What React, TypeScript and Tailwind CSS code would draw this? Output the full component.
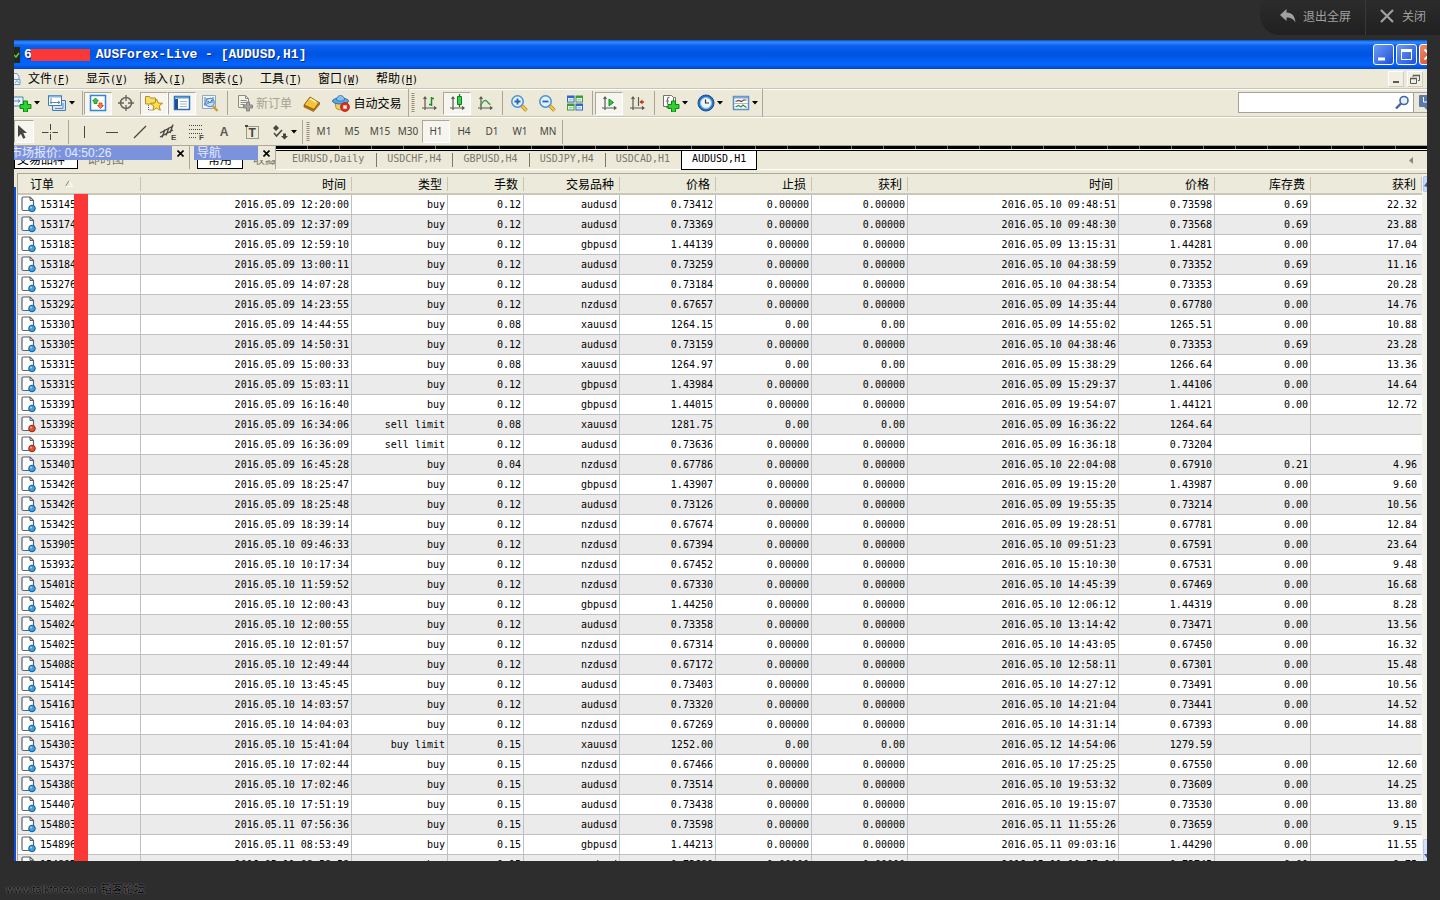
import { useState } from "react";
import type { ReactNode } from "react";
import clsx from "clsx";

const mono = "font-['DejaVu_Sans_Mono','Noto_Sans_CJK_SC',monospace]";
const cjk = "font-['Noto_Sans_CJK_SC',sans-serif]";

type Order = {
  id: string;
  open: string;
  type: string;
  lots: string;
  symbol: string;
  price: string;
  sl: string;
  tp: string;
  close: string;
  closePrice: string;
  swap: string;
  profit: string;
};

// id | open | type | lots | symbol | price | sl and tp | close | close price | swap | profit
const raw = `153145|05.09 12:20:00|buy|0.12|audusd|0.73412|0.00000|05.10 09:48:51|0.73598|0.69|22.32
153174|05.09 12:37:09|buy|0.12|audusd|0.73369|0.00000|05.10 09:48:30|0.73568|0.69|23.88
153183|05.09 12:59:10|buy|0.12|gbpusd|1.44139|0.00000|05.09 13:15:31|1.44281|0.00|17.04
153184|05.09 13:00:11|buy|0.12|audusd|0.73259|0.00000|05.10 04:38:59|0.73352|0.69|11.16
153276|05.09 14:07:28|buy|0.12|audusd|0.73184|0.00000|05.10 04:38:54|0.73353|0.69|20.28
153292|05.09 14:23:55|buy|0.12|nzdusd|0.67657|0.00000|05.09 14:35:44|0.67780|0.00|14.76
153301|05.09 14:44:55|buy|0.08|xauusd|1264.15|0.00|05.09 14:55:02|1265.51|0.00|10.88
153305|05.09 14:50:31|buy|0.12|audusd|0.73159|0.00000|05.10 04:38:46|0.73353|0.69|23.28
153315|05.09 15:00:33|buy|0.08|xauusd|1264.97|0.00|05.09 15:38:29|1266.64|0.00|13.36
153319|05.09 15:03:11|buy|0.12|gbpusd|1.43984|0.00000|05.09 15:29:37|1.44106|0.00|14.64
153391|05.09 16:16:40|buy|0.12|gbpusd|1.44015|0.00000|05.09 19:54:07|1.44121|0.00|12.72
153398|05.09 16:34:06|sell limit|0.08|xauusd|1281.75|0.00|05.09 16:36:22|1264.64||
153398|05.09 16:36:09|sell limit|0.12|audusd|0.73636|0.00000|05.09 16:36:18|0.73204||
153401|05.09 16:45:28|buy|0.04|nzdusd|0.67786|0.00000|05.10 22:04:08|0.67910|0.21|4.96
153426|05.09 18:25:47|buy|0.12|gbpusd|1.43907|0.00000|05.09 19:15:20|1.43987|0.00|9.60
153426|05.09 18:25:48|buy|0.12|audusd|0.73126|0.00000|05.09 19:55:35|0.73214|0.00|10.56
153429|05.09 18:39:14|buy|0.12|nzdusd|0.67674|0.00000|05.09 19:28:51|0.67781|0.00|12.84
153905|05.10 09:46:33|buy|0.12|nzdusd|0.67394|0.00000|05.10 09:51:23|0.67591|0.00|23.64
153932|05.10 10:17:34|buy|0.12|nzdusd|0.67452|0.00000|05.10 15:10:30|0.67531|0.00|9.48
154018|05.10 11:59:52|buy|0.12|nzdusd|0.67330|0.00000|05.10 14:45:39|0.67469|0.00|16.68
154024|05.10 12:00:43|buy|0.12|gbpusd|1.44250|0.00000|05.10 12:06:12|1.44319|0.00|8.28
154024|05.10 12:00:55|buy|0.12|audusd|0.73358|0.00000|05.10 13:14:42|0.73471|0.00|13.56
154025|05.10 12:01:57|buy|0.12|nzdusd|0.67314|0.00000|05.10 14:43:05|0.67450|0.00|16.32
154088|05.10 12:49:44|buy|0.12|nzdusd|0.67172|0.00000|05.10 12:58:11|0.67301|0.00|15.48
154145|05.10 13:45:45|buy|0.12|audusd|0.73403|0.00000|05.10 14:27:12|0.73491|0.00|10.56
154161|05.10 14:03:57|buy|0.12|audusd|0.73320|0.00000|05.10 14:21:04|0.73441|0.00|14.52
154161|05.10 14:04:03|buy|0.12|nzdusd|0.67269|0.00000|05.10 14:31:14|0.67393|0.00|14.88
154303|05.10 15:41:04|buy limit|0.15|xauusd|1252.00|0.00|05.12 14:54:06|1279.59||
154379|05.10 17:02:44|buy|0.15|nzdusd|0.67466|0.00000|05.10 17:25:25|0.67550|0.00|12.60
154380|05.10 17:02:46|buy|0.15|audusd|0.73514|0.00000|05.10 19:53:32|0.73609|0.00|14.25
154407|05.10 17:51:19|buy|0.15|audusd|0.73438|0.00000|05.10 19:15:07|0.73530|0.00|13.80
154803|05.11 07:56:36|buy|0.15|audusd|0.73598|0.00000|05.11 11:55:26|0.73659|0.00|9.15
154896|05.11 08:53:49|buy|0.15|gbpusd|1.44213|0.00000|05.11 09:03:16|1.44290|0.00|11.55
154897|05.11 08:58:58|buy|0.15|audusd|0.73680|0.00000|05.11 10:57:04|0.73745|0.00|9.75`;

const orders: Order[] = raw.split("\n").map((line) => {
  const [id, open, type, lots, symbol, price, stop, close, closePrice, swap, profit] = line.split("|");
  return {
    id,
    open: `2016.${open}`,
    type,
    lots,
    symbol,
    price,
    sl: stop,
    tp: stop,
    close: `2016.${close}`,
    closePrice,
    swap,
    profit,
  };
});

const columns: { key: keyof Order; label: string; width: string }[] = [
  { key: "id", label: "订单", width: "w-[123px]" },
  { key: "open", label: "时间", width: "w-[211px]" },
  { key: "type", label: "类型", width: "w-[96px]" },
  { key: "lots", label: "手数", width: "w-[76px]" },
  { key: "symbol", label: "交易品种", width: "w-[96px]" },
  { key: "price", label: "价格", width: "w-[96px]" },
  { key: "sl", label: "止损", width: "w-[96px]" },
  { key: "tp", label: "获利", width: "w-[96px]" },
  { key: "close", label: "时间", width: "" },
  { key: "closePrice", label: "价格", width: "w-[96px]" },
  { key: "swap", label: "库存费", width: "w-[96px]" },
  { key: "profit", label: "获利", width: "w-[111px]" },
];

const menus = [
  ["文件", "F"],
  ["显示", "V"],
  ["插入", "I"],
  ["图表", "C"],
  ["工具", "T"],
  ["窗口", "W"],
  ["帮助", "H"],
];

const periods = ["M1", "M5", "M15", "M30", "H1", "H4", "D1", "W1", "MN"];
const chartTabs = ["EURUSD,Daily", "USDCHF,H4", "GBPUSD,H4", "USDJPY,H4", "USDCAD,H1", "AUDUSD,H1"];

function Icon({ children, size = 18 }: { children: ReactNode; size?: number }) {
  return (
    <svg width={size} height={size} viewBox="0 0 18 18" fill="none" className="shrink-0" aria-hidden="true">
      {children}
    </svg>
  );
}

function Caret() {
  return (
    <svg width="6" height="4" viewBox="0 0 6 4" className="shrink-0" aria-hidden="true">
      <path d="M0 0h6L3 3.5z" fill="#000" />
    </svg>
  );
}

function Sep({ wide }: { wide?: boolean }) {
  return (
    <span className={clsx("flex shrink-0 justify-center", wide ? "w-[6px]" : "w-1")}>
      <span className="h-6 w-px bg-[#a9a698]" />
    </span>
  );
}

function Grip() {
  return (
    <svg width="4" height="20" viewBox="0 0 4 20" className="shrink-0" aria-hidden="true">
      <path d="M2 0v20" stroke="#8f8c7d" strokeWidth="3" strokeDasharray="1 1" />
    </svg>
  );
}

function Tool({
  label,
  active,
  className,
  children,
}: {
  label: string;
  active?: boolean;
  className?: string;
  children: ReactNode;
}) {
  return (
    <button
      type="button"
      aria-label={label}
      className={clsx(
        "flex h-[23px] shrink-0 items-center justify-center",
        className ?? "w-7",
        active && "border border-[#aca899] border-r-white border-b-white bg-[#f6f5f0]"
      )}
    >
      {children}
    </button>
  );
}

const Plus = () => (
  <path d="M9.500 7h4v3.500h3.500v4h-3.500V18h-4v-3.500H6v-4h3.500z" fill="#2fd02f" stroke="#0b8a12" />
);

const Axes = () => (
  <path d="M5 3v13M2 14h14M3.500 5L5 3l1.500 2M14 12.500l2 1.500-2 1.500" stroke="#5b5b54" strokeWidth="1.200" />
);

function Lens({ sign }: { sign: string }) {
  return (
    <Icon>
      <path d="M11 11l5.500 5.500" stroke="#b8860b" strokeWidth="3.500" />
      <path d="M11 11l5.300 5.300" stroke="#f5cb4b" strokeWidth="2" />
      <circle cx="7.500" cy="7.500" r="5.700" fill="#e2f1ff" stroke="#4d8fd0" strokeWidth="1.500" />
      <path d={sign} stroke="#1f66bd" strokeWidth="1.800" />
    </Icon>
  );
}

function Toolbar() {
  return (
    <div className="flex h-7 items-center border-t border-b border-t-white border-b-[#c9c6b8]">
      <div className="flex h-7 shrink-0 items-center border-r border-[#aca899]">
        <Tool label="新图表" className="w-7 gap-[2px] !justify-start">
          <Icon>
            <path d="M-3 3H9v9H-3z" fill="#e6f1fb" stroke="#4b83b9" />
            <path d="M0 7h6M4 5.500L6 7 4 8.500" stroke="#5f87ad" />
            <Plus />
          </Icon>
          <Caret />
        </Tool>
        <Tool label="配置文件" className="w-[38px] gap-[3px]">
          <Icon>
            <path d="M4.500 6.500h13v10h-13z" fill="#d5e7f7" stroke="#3f7cb6" />
            <path d="M.5 1.500h13v10H.5z" fill="#fff" stroke="#3f7cb6" />
            <path d="M1 2.500h12" stroke="#86b3dd" strokeWidth="2" />
            <path d="M3 4v6M2 8.500h10M10 7l2 1.500-2 1.500M15 9v5.500H7" stroke="#5f87ad" />
          </Icon>
          <Caret />
        </Tool>
        <Sep />
        <Tool label="市场报价" active>
          <Icon>
            <path d="M1.500 1.500h15v15h-15z" fill="#fff" stroke="#2f86d4" strokeWidth="1.500" />
            <path d="M6.500 4l3 3H8v2.500H5V7H3.500z" fill="#45c33d" stroke="#1b8a1b" strokeWidth=".8" />
            <path d="M11.500 14.500l3-3H13V9h-3v2.500H8.500z" fill="#ff7a4a" stroke="#d13c14" strokeWidth=".8" />
          </Icon>
        </Tool>
        <Tool label="数据窗口">
          <Icon>
            <circle cx="9" cy="9" r="5.500" stroke="#66665e" strokeWidth="1.500" />
            <path d="M9 1v6M9 11v6M1 9h6M11 9h6" stroke="#66665e" strokeWidth="1.300" />
          </Icon>
        </Tool>
        <Tool label="导航" active>
          <Icon>
            <path d="M.5 2.500h4l1 1.500h5v6H.5z" fill="#f7dc6b" stroke="#b8901c" />
            <path d="M3.500 11v5H7" stroke="#555" strokeDasharray="1 1" />
            <path
              d="M11.500 5l1.700 4 4.300.3-3.300 2.700 1.100 4.300-3.800-2.300-3.700 2.300 1.100-4.300L5.500 9.300l4.300-.3z"
              fill="#ffe24d"
              stroke="#b98a10"
            />
          </Icon>
        </Tool>
        <Tool label="终端" active>
          <Icon>
            <path d="M1.500 2.500h15v13h-15z" fill="#fff" stroke="#2f6fb5" strokeWidth="1.500" />
            <path d="M2 3.500h14" stroke="#5b9bdc" strokeWidth="2" />
            <path d="M3.500 5v10" stroke="#1e4f94" strokeWidth="3" />
            <path d="M7 7.500h7M7 10h7M7 12.500h7" stroke="#a5b6c8" />
          </Icon>
        </Tool>
        <Tool label="策略测试">
          <Icon>
            <path d="M1.500 1.500h13v13h-13z" fill="#eef5fc" stroke="#8ba9c7" />
            <path d="M4 3v9M3 10h8M6 4v4M12 3v4" stroke="#55799f" />
            <circle cx="9" cy="8.500" r="4.200" fill="#cfe4f7" fillOpacity=".8" stroke="#5c93c9" strokeWidth="1.300" />
            <path d="M7 10V7l2 2 2-3v3" stroke="#3d73a9" />
            <path d="M12 12l4.500 5" stroke="#d29a2f" strokeWidth="2.500" />
          </Icon>
        </Tool>
        <Sep wide />
        <button
          type="button"
          className={clsx("flex h-[23px] w-[68px] shrink-0 items-center justify-center gap-[2px] text-xs text-[#a5a294]", cjk)}
        >
          <Icon>
            <path d="M2.500 1.500h7l3 3v9h-10z" fill="#f2f1ea" stroke="#8f8d83" />
            <path d="M9.500 1.500v3h3M4.500 6.500h6M4.500 8.500h6M4.500 10.500h4" stroke="#8f8d83" />
            <path d="M10.500 8h3v3h3v3h-3v3h-3v-3h-3v-3h3z" fill="#a5a59d" stroke="#85857d" />
          </Icon>
          <span className="leading-4">新订单</span>
        </button>
        <Tool label="编辑器">
          <Icon>
            <path d="M1 11l6-8 9 5.500-5 7z" fill="#f3c33c" stroke="#8e5d0b" />
            <path d="M1 11v2l9.500 4.500 6-7v-2l-5.500 7z" fill="#b87a14" stroke="#8e5d0b" strokeWidth=".7" />
            <path d="M7 4.500l6 3.500" stroke="#fff0a8" strokeWidth="1.500" />
          </Icon>
        </Tool>
        <button
          type="button"
          className={clsx("flex h-[23px] w-[82px] shrink-0 items-center justify-center gap-[3px] text-xs text-black", cjk)}
        >
          <Icon>
            <path d="M3 8l1 6c2 2.500 7 2.500 10 0l1-6z" fill="#f2cf63" stroke="#b8912c" />
            <ellipse cx="8.500" cy="7" rx="8" ry="3" fill="#5fa8e2" stroke="#2b6fb2" />
            <path d="M4.500 6c0-6 8-6 8 0-2 1.500-6 1.500-8 0z" fill="#84c3f1" stroke="#2b6fb2" strokeWidth=".8" />
            <circle cx="13" cy="13" r="4.500" fill="#e0311c" stroke="#a81a0c" strokeWidth=".7" />
            <path d="M11.300 11.300h3.400v3.400h-3.400z" fill="#fff" />
          </Icon>
          <span className="leading-4">自动交易</span>
        </button>
      </div>
      <div className="flex h-7 shrink-0 items-center border-r border-[#aca899] pl-[2px]">
        <Grip />
        <Tool label="柱状图">
          <Icon>
            <Axes />
            <path d="M11.500 3v9M9 10.500h2.500M11.500 4.500H14" stroke="#15912a" strokeWidth="1.500" />
          </Icon>
        </Tool>
        <Tool label="阴阳烛" active>
          <Icon>
            <Axes />
            <path d="M11.500 0v13" stroke="#127f22" strokeWidth="1.300" />
            <path d="M9.500 2.500h4v8h-4z" fill="#35d04c" stroke="#127f22" />
          </Icon>
        </Tool>
        <Tool label="折线图">
          <Icon>
            <Axes />
            <path d="M4 12c2-2 3-6 5.500-5.500 2.500.500 2.500 3.500 5 4" stroke="#3b9a4b" strokeWidth="1.300" />
          </Icon>
        </Tool>
        <Sep wide />
        <Tool label="放大">
          <Lens sign="M4.500 7.500h6M7.500 4.500v6" />
        </Tool>
        <Tool label="缩小">
          <Lens sign="M4.500 7.500h6" />
        </Tool>
        <Tool label="平铺窗口">
          <Icon>
            <path d="M1 1.500h7.500v7H1zM9.500 9.500H17v7H9.500z" fill="#3167c9" />
            <path d="M9.500 1.500H17v7H9.500zM1 9.500h7.500v7H1z" fill="#3f9d2c" />
            <path
              d="M2 4h5.500v3.500H2zM10.500 4H16v3.500h-5.500zM2 12h5.500v3.500H2zM10.500 12H16v3.500h-5.500z"
              fill="#e9f2fb"
            />
            <path d="M3 5.800h3.500M11.500 5.800H15M3 13.800h3.500M11.500 13.800H15" stroke="#8fa9c9" />
          </Icon>
        </Tool>
        <Sep wide />
        <Tool label="自动滚动" active>
          <Icon>
            <Axes />
            <path d="M9 5l4.500 3.500L9 12z" fill="#33c04a" stroke="#178a2b" />
          </Icon>
        </Tool>
        <Tool label="图表平移">
          <Icon>
            <Axes />
            <path d="M10.500 3v9" stroke="#5b5b54" strokeWidth="1.200" />
            <path d="M16 8h-3.500" stroke="#b43a17" strokeWidth="1.500" />
            <path d="M11.500 8l3-2.500v5z" fill="#b43a17" />
          </Icon>
        </Tool>
        <Sep wide />
        <Tool label="指标列表" className="w-[35px] gap-[2px]">
          <Icon>
            <path d="M4.500 3.500h9v10h-9z" fill="#fff" stroke="#73736b" />
            <path d="M1.500 1.500h8l2 2v9h-10z" fill="#fff" stroke="#73736b" />
            <path d="M7.500 3.500c-2-.5-2 1-2 3v4M4 7h3" stroke="#73736b" strokeWidth="1.200" />
            <Plus />
          </Icon>
          <Caret />
        </Tool>
        <Tool label="时间周期" className="w-[35px] gap-[2px]">
          <Icon>
            <circle cx="9" cy="9" r="8" fill="#2b72c4" stroke="#174f96" />
            <circle cx="9" cy="9" r="5.500" fill="#eef6ff" stroke="#8fbbe8" />
            <path d="M8.500 5.500V9H12" stroke="#333" strokeWidth="1.200" />
          </Icon>
          <Caret />
        </Tool>
        <Tool label="模板" className="w-[35px] gap-[2px]">
          <Icon>
            <path d="M1.500 2.500h15v13h-15z" fill="#fff" stroke="#5a8fc4" strokeWidth="1.500" />
            <path d="M2 3.500h14" stroke="#76a9dc" strokeWidth="2" />
            <path d="M3.500 7.500l3-1 3 1 2-1.500h3" stroke="#7b3b23" strokeWidth="1.200" />
            <path d="M2 9.500h14" stroke="#9bbcdc" />
            <path d="M3.500 13l3-1.500 2.500 1.500 2-2 3.500 2.500" stroke="#2c8c3a" strokeWidth="1.200" />
          </Icon>
          <Caret />
        </Tool>
      </div>
      <div className="mt-[2px] ml-auto flex h-[21px] shrink-0 self-start border border-r-0 border-[#a5a294] bg-white">
        <input aria-label="搜索" type="text" className="w-[156px] bg-transparent px-1 text-xs outline-none" />
        <button type="button" aria-label="查找" className="flex w-[19px] items-center border-r border-[#a5a294]">
          <svg width="15" height="15" viewBox="0 0 15 15" fill="none" aria-hidden="true">
            <circle cx="9" cy="5.500" r="4" fill="#e8f0fb" stroke="#3f66ab" strokeWidth="1.600" />
            <path d="M6 8.500L1 13.500" stroke="#3f66ab" strokeWidth="2.400" />
          </svg>
        </button>
        <span className="flex w-[13px] items-center justify-end overflow-hidden bg-[#ece9d8]">
          <svg width="8" height="17" viewBox="0 0 8 17" aria-hidden="true">
            <path d="M0 2q0-1 1-1h7v15l-3-3H1q-1 0-1-1z" fill="#5a79ac" />
            <path d="M4.500 3v5H8" stroke="#fff" fill="none" />
          </svg>
        </span>
      </div>
    </div>
  );
}

function DrawBar() {
  const [period, setPeriod] = useState("H1");

  return (
    <div className="flex h-7 items-center border-t border-t-white">
      <div className="flex h-6 shrink-0 items-center border-r border-[#aca899]">
        <Tool label="光标" active className="w-5">
          <svg width="12" height="16" viewBox="0 0 12 16" className="mr-1 shrink-0" aria-hidden="true">
            <path d="M2 1v12l3-3 2.200 4.800 2.300-1L7.300 9H11z" fill="#46463f" />
          </svg>
        </Tool>
        <Tool label="十字准线" className="w-8">
          <Icon>
            <path d="M9.500 1v6M9.500 11v6M1 9.500h6.500M11.500 9.500H17M9 9.500h1" stroke="#46463f" />
          </Icon>
        </Tool>
        <Sep />
        <Tool label="垂直线">
          <Icon>
            <path d="M9.500 3v12" stroke="#46463f" />
          </Icon>
        </Tool>
        <Tool label="水平线">
          <Icon>
            <path d="M3 9.500h12" stroke="#46463f" />
          </Icon>
        </Tool>
        <Tool label="趋势线">
          <Icon>
            <path d="M3 15L15 3" stroke="#46463f" strokeWidth="1.200" />
          </Icon>
        </Tool>
        <Tool label="等距通道">
          <Icon>
            <path
              d="M1 10L14 3M1 14l13-7M3 14.500l3-8M7 12.500l3-8M11 10l3-8.500"
              stroke="#46463f"
              strokeWidth="1.300"
            />
            <text x="12" y="17" fontSize="8" fontWeight="bold" fill="#46463f" fontFamily="Liberation Sans">
              E
            </text>
          </Icon>
        </Tool>
        <Tool label="斐波纳契">
          <Icon>
            <path d="M2 2.500h14M2 6.500h14M2 10.500h14M2 14.500h8" stroke="#46463f" strokeDasharray="1 1" />
            <text x="12" y="17" fontSize="8" fontWeight="bold" fill="#46463f" fontFamily="Liberation Sans">
              F
            </text>
          </Icon>
        </Tool>
        <Tool label="文字">
          <span className="font-['Liberation_Sans',sans-serif] text-xs font-bold text-[#5b5b54]">A</span>
        </Tool>
        <Tool label="文字标签">
          <Icon>
            <path d="M3.500 3.500h12v12h-12z" stroke="#46463f" strokeDasharray="1 1" />
            <path d="M2 2h3v2H2z" fill="#46463f" />
            <text x="5.500" y="14" fontSize="12" fontWeight="bold" fill="#46463f" fontFamily="Liberation Sans">
              T
            </text>
          </Icon>
        </Tool>
        <Tool label="箭头" className="w-9 gap-[2px]">
          <Icon>
            <path d="M2 5l3-3 3 3-3 3zM10 13h7l-3.500 3.500zM12 10.500h3V13h-3z" fill="#46463f" />
            <path d="M3 10l2.500 3L11 7" stroke="#46463f" strokeWidth="1.500" />
          </Icon>
          <Caret />
        </Tool>
      </div>
      <div className="flex h-6 shrink-0 items-center border-r border-[#aca899] pl-[3px]">
        <Grip />
        {periods.map((p) => (
          <button
            key={p}
            type="button"
            onClick={() => setPeriod(p)}
            className={clsx(
              "flex h-[23px] w-7 items-center justify-center font-['Noto_Sans',sans-serif] text-[10px] text-[#46463f]",
              p === period && "border border-[#aca899] border-r-white border-b-white bg-[#f6f5f0]"
            )}
          >
            {p}
          </button>
        ))}
      </div>
    </div>
  );
}

function DockPanel({
  title,
  tabs,
  className,
  titleClass,
  tabClass,
}: {
  title: string;
  tabs: string[];
  className: string;
  titleClass?: string;
  tabClass: string;
}) {
  return (
    <div className={clsx("flex h-[23px] shrink-0 flex-col overflow-hidden border-r border-[#aca899]", className)}>
      <div className="flex h-[14px] shrink-0 items-center">
        <h2 className="flex h-[14px] flex-1 items-center overflow-hidden bg-[#7b93dd] font-['Liberation_Sans','Noto_Sans_CJK_SC',sans-serif] text-xs leading-[14px] whitespace-nowrap text-[#e4ebff]">
          <span className={titleClass}>{title}</span>
        </h2>
        <button type="button" aria-label="关闭面板" className="flex w-[17px] items-center justify-center">
          <svg width="7" height="7" viewBox="0 0 7 7" aria-hidden="true">
            <path d="M.5.500l6 6M6.500.500l-6 6" stroke="#000" strokeWidth="1.600" />
          </svg>
        </button>
      </div>
      <div className={clsx("flex h-[9px] items-end overflow-hidden text-xs leading-[14px] whitespace-nowrap", cjk)}>
        <span className={clsx("border border-t-0 border-black bg-white pb-[2px] text-black", tabClass)}>{tabs[0]}</span>
        <span className="pb-[3px] pl-[10px] text-[#7a776b]">{tabs[1]}</span>
      </div>
    </div>
  );
}

function TabStrip() {
  const [tab, setTab] = useState("AUDUSD,H1");

  return (
    <div className="flex h-7 border-t border-[#aca899]">
      <DockPanel
        title="市场报价: 04:50:26"
        tabs={["交易品种", "即时图"]}
        className="w-[176px]"
        titleClass="-ml-1"
        tabClass="pr-3 pl-[2px]"
      />
      <DockPanel
        title="导航"
        tabs={["常用", "收藏"]}
        className="ml-1 w-[82px]"
        titleClass="ml-[3px]"
        tabClass="ml-[3px] px-[10px]"
      />
      <div className="min-w-0 flex-1">
        <div className="h-[3px] bg-[repeating-linear-gradient(90deg,#000_0_31px,#777_31px_32px)]" />
        <div className="h-px bg-white" />
        <div className="flex h-[19px] border-t border-black">
          {chartTabs.map((t) => (
            <button
              key={t}
              type="button"
              onClick={() => setTab(t)}
              className={clsx("flex h-[19px] items-start pt-[2px] text-[10px]", mono, {
                "border border-t-0 border-black bg-white px-[10px] leading-[12px] text-black": t === tab,
                "text-[#7a776b]": t !== tab,
              })}
            >
              {t === tab ? (
                t
              ) : (
                <span
                  className={clsx(
                    "h-[14px] leading-[12px]",
                    t === "EURUSD,Daily" ? "pr-3 pl-4" : "pr-[11px] pl-[10px]",
                    t !== "USDCAD,H1" && "border-r border-[#7a776b]"
                  )}
                >
                  {t}
                </span>
              )}
            </button>
          ))}
          <button type="button" aria-label="向左滚动" className="mr-[14px] ml-auto flex items-center">
            <svg width="4" height="7" viewBox="0 0 4 7" aria-hidden="true">
              <path d="M4 0v7L0 3.500z" fill="#8b887b" />
            </svg>
          </button>
        </div>
        <div className="h-px bg-white" />
      </div>
    </div>
  );
}

function OrderIcon({ limit }: { limit: boolean }) {
  return (
    <svg width="15" height="17" viewBox="0 0 15 17" fill="none" className="shrink-0" aria-hidden="true">
      <path d="M1 2.500Q1 1 2.500 1H9l3.500 3.500V13q0 1.500-1.500 1.500H2.500Q1 14.500 1 13z" fill="#fff" stroke="#59616b" strokeWidth="1.200" />
      <path d="M9 1v3.500h3.500" stroke="#59616b" />
      <circle
        cx="11"
        cy="12.500"
        r="3.300"
        fill={limit ? "#e0522f" : "#3b9ede"}
        stroke={limit ? "#8f2513" : "#145c93"}
      />
      <circle cx="10" cy="11.500" r="1" fill={limit ? "#f5a48c" : "#a4d8f7"} />
    </svg>
  );
}

function OrdersTable() {
  return (
    <table className="w-full table-fixed border-separate border-spacing-0">
      <colgroup>
        {columns.map((c) => (
          <col key={c.key} className={c.width} />
        ))}
      </colgroup>
      <thead>
        <tr className={clsx("text-xs text-black", cjk)}>
          {columns.map((c) => (
            <th
              key={c.key}
              scope="col"
              className="h-[22px] border-t border-b-2 border-t-[#aca899] border-b-[#cbc7b8] bg-[#ebeadb] p-0 font-normal"
            >
              <div
                className={clsx(
                  "flex h-[14px] items-center border-r border-[#c7c5b2] pr-[5px] leading-[14px]",
                  c.key === "id" ? "gap-[11px] pl-3" : "justify-end"
                )}
              >
                {c.label}
                {c.key === "id" && (
                  <svg width="8" height="7" viewBox="0 0 8 7" fill="none" aria-hidden="true">
                    <path d="M.5 6.500L4 .5" stroke="#8b887b" />
                    <path d="M4 .5l3.500 6h-7" stroke="#fff" />
                  </svg>
                )}
              </div>
            </th>
          ))}
        </tr>
      </thead>
      <tbody className={clsx("text-[10px] text-black", mono)}>
        {orders.map((order, i) => (
          <tr key={i} className="odd:bg-white even:bg-[#ebebeb]">
            {columns.map((c) => (
              <td
                key={c.key}
                className={clsx(
                  "h-5 border-r border-b border-[#c0c0c0] p-0 leading-[18px] whitespace-nowrap",
                  c.key === "profit" ? "border-r-transparent pr-1" : "pr-[2px]",
                  c.key === "id" ? "text-left" : "text-right"
                )}
              >
                {c.key === "id" ? (
                  <span className="flex items-center gap-1 pl-[3px]">
                    <OrderIcon limit={order.type === "sell limit"} />
                    {order.id}
                  </span>
                ) : (
                  order[c.key]
                )}
              </td>
            ))}
          </tr>
        ))}
      </tbody>
    </table>
  );
}

export default function App() {
  return (
    <div className="flex h-screen flex-col overflow-hidden bg-[#2d2d2d]">
      {/* viewer controls */}
      <header className="flex h-10 shrink-0 justify-end">
        <div className={clsx("flex h-[35px] rounded-bl-[20px] bg-linear-to-b from-[#2c2c2c] to-[#202020] text-xs text-[#a0a0a0]", cjk)}>
          <button type="button" className="flex items-center gap-[7px] border-r border-[#393939] pr-[14px] pb-1 pl-5">
            <svg width="16" height="14" viewBox="0 0 16 14" aria-hidden="true">
              <path d="M6.500 0v3.500C12 3.500 15 7 15.500 13.500 13.500 10 11 8.500 6.500 8.500V12L0 6z" fill="#a0a0a0" />
            </svg>
            退出全屏
          </button>
          <button type="button" className="flex items-center gap-2 pr-[14px] pb-1 pl-[14px]">
            <svg width="14" height="14" viewBox="0 0 14 14" aria-hidden="true">
              <path d="M1 1l12 12M13 1L1 13" stroke="#a0a0a0" strokeWidth="2.200" />
            </svg>
            关闭
          </button>
        </div>
      </header>

      <main className="mr-[13px] ml-[14px] flex min-h-0 flex-1 flex-col overflow-hidden bg-[#ece9d8]">
        <div className="flex h-[29px] shrink-0 items-center overflow-hidden bg-[linear-gradient(180deg,#0a4fd0_0%,#2f8bff_8%,#0a5fee_20%,#0054e3_50%,#0566ff_85%,#0046c8_100%)]">
          <svg width="6" height="16" viewBox="0 0 6 16" className="shrink-0" aria-hidden="true">
            <path d="M0 0h6v16H0z" fill="#202a1c" />
            <path d="M0 8l2 2 3-4" stroke="#65c43b" strokeWidth="1.500" fill="none" />
          </svg>
          <h1 className="flex items-center pl-1 font-['Liberation_Mono',monospace] text-[13px] font-bold whitespace-pre text-white [text-shadow:1px_1px_0_#0a2a80]">
            6<span className="mr-[6px] -ml-px h-3 w-[59px] bg-[#fb3836]" />
            AUSForex-Live - [AUDUSD,H1]
          </h1>
          <div className="-mr-[13px] ml-auto flex shrink-0 gap-[2px]">
            <button type="button" aria-label="最小化" className="h-[21px] w-[21px] rounded-[3px] border border-white bg-linear-to-br from-[#6f9bf5] to-[#1c4fd8]">
              <svg viewBox="0 0 19 19" aria-hidden="true">
                <path d="M4 12.500h7v3H4z" fill="#fff" />
              </svg>
            </button>
            <button type="button" aria-label="最大化" className="h-[21px] w-[21px] rounded-[3px] border border-white bg-linear-to-br from-[#6f9bf5] to-[#1c4fd8]">
              <svg viewBox="0 0 19 19" fill="none" aria-hidden="true">
                <path d="M4.500 5v9.500h10V5" stroke="#fff" />
                <path d="M4 5.500h11" stroke="#fff" strokeWidth="3" />
              </svg>
            </button>
            <button type="button" aria-label="关闭窗口" className="h-[21px] w-[21px] rounded-[3px] border border-white bg-linear-to-br from-[#f08a68] to-[#d1401c]">
              <svg viewBox="0 0 19 19" aria-hidden="true">
                <path d="M4.500 4.500l10 10M14.500 4.500l-10 10" stroke="#fff" strokeWidth="2.200" />
              </svg>
            </button>
          </div>
        </div>

        <nav className="flex h-5 shrink-0 items-center border-b border-[#c9c6b8]">
          <svg width="7" height="14" viewBox="0 0 7 14" fill="none" className="shrink-0" aria-hidden="true">
            <path d="M-5 1.500H3l2 3v3M-1 7.500h7v5h-7z" fill="#eef5fd" stroke="#6c9cd0" />
            <path d="M1 11l2-2.500L5 11" stroke="#6c9cd0" />
          </svg>
          <ul className={clsx("flex pl-[7px] text-xs leading-4 text-black", cjk)}>
            {menus.map(([name, hotkey]) => (
              <li key={hotkey} className="w-[58px]">
                <button type="button" className="whitespace-nowrap">
                  {name}
                  <span className={clsx("text-[10px]", mono)}>
                    (<u>{hotkey}</u>)
                  </span>
                </button>
              </li>
            ))}
          </ul>
          <div className="mr-[4px] ml-auto flex gap-[3px]">
            <button type="button" aria-label="最小化图表" className="flex h-4 w-4 items-center justify-center border border-white border-r-[#d0cdbe] border-b-[#d0cdbe] bg-[#f1efe4]">
              <svg width="10" height="10" viewBox="0 0 10 10" aria-hidden="true">
                <path d="M2 7h6v2H2z" fill="#5b5b54" />
              </svg>
            </button>
            <button type="button" aria-label="还原图表" className="flex h-4 w-4 items-center justify-center border border-white border-r-[#d0cdbe] border-b-[#d0cdbe] bg-[#f1efe4]">
              <svg width="10" height="10" viewBox="0 0 10 10" fill="none" aria-hidden="true">
                <path d="M3 3V1.500h6.500v5H8M.5 4.500h6v5h-6z" stroke="#5b5b54" />
                <path d="M3 1.500h7M0 4.500h7" stroke="#5b5b54" strokeWidth="1.600" />
              </svg>
            </button>
          </div>
        </nav>

        <Toolbar />
        <DrawBar />
        <TabStrip />

        <div className="flex min-h-0 flex-1">
          <div className="mt-[14px] w-[2px] shrink-0 bg-[#0a4fdc]" />
          <div className="relative ml-px min-w-0 flex-1 overflow-hidden border-l border-[#aca899]">
            <OrdersTable />
            {/* redaction strip over the ticket numbers */}
            <div className="absolute top-[21px] bottom-0 left-[56px] w-[14px] bg-[#fb3836]" />
          </div>
          <div className="flex w-[5px] shrink-0 flex-col justify-between border-t border-[#aca899] bg-[#f3f2ea] pl-px">
            <span className="mt-[2px] flex h-4 items-center justify-end rounded-l-[2px] border border-r-0 border-[#b3c5f3] bg-[#c8d6fb]">
              <svg width="3" height="5" viewBox="0 0 3 5" aria-hidden="true">
                <path d="M0 4l3-4v5z" fill="#4d6185" />
              </svg>
            </span>
            <span className="flex h-[22px] items-end justify-end rounded-l-[2px] border border-r-0 border-[#b3c5f3] bg-[#d5e0fc] pb-[2px]">
              <svg width="3" height="5" viewBox="0 0 3 5" aria-hidden="true">
                <path d="M0 1h3v4z" fill="#4d6185" />
              </svg>
            </span>
          </div>
        </div>
      </main>

      <footer className="flex h-[39px] shrink-0 items-end pb-1 pl-[6px]">
        <p className="font-['Liberation_Sans','Noto_Sans_CJK_SC',sans-serif] text-[11px] leading-[14px] text-black [text-shadow:0_0_1px_#888,0_0_1px_#888]">
          www.talkforex.com 韬客论坛
        </p>
      </footer>
    </div>
  );
}
